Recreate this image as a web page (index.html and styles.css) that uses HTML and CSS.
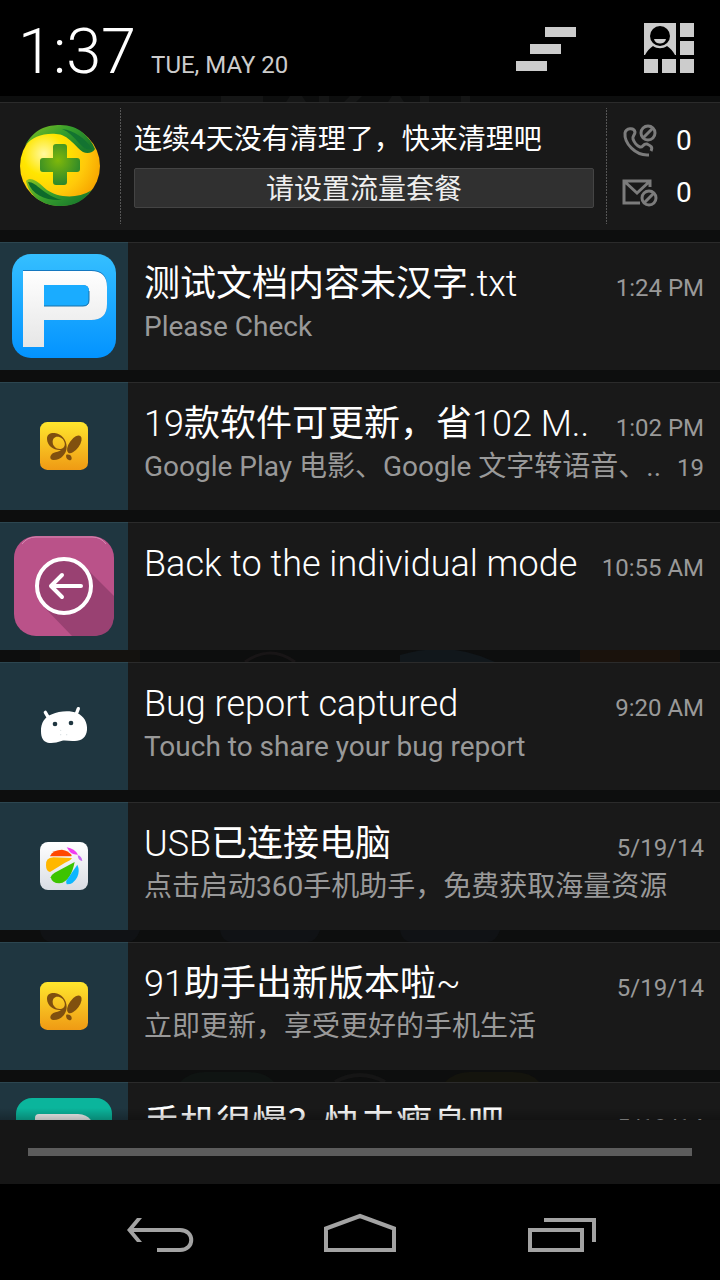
FILE: index.html
```html
<!DOCTYPE html>
<html lang="zh-CN">
<head>
<meta charset="utf-8">
<meta name="viewport" content="width=device-width, initial-scale=1">
<title>Notifications</title>
<link rel="stylesheet" href="styles.css">
</head>
<body>
<svg class="defs" width="0" height="0" aria-hidden="true">
  <defs>
    <linearGradient id="gold" x1="0" y1="0" x2="0" y2="1"><stop offset="0" stop-color="#ffe62d"/><stop offset="1" stop-color="#ef9a14"/></linearGradient>
    <symbol id="butterfly" viewBox="0 0 144 144">
      <rect width="144" height="144" rx="22" fill="url(#gold)"/>
      <g fill="#80500f">
        <path fill-rule="evenodd" d="M21 52C20 37 31 32 44 33C64 35 80 53 80 75C80 96 62 115 40 114C27 113 29 99 40 93C48 89 58 90 63 84C42 86 22 72 21 52ZM38 60C38 71 47 81 59 81C70 81 76 73 74 63C72 51 62 44 52 44C43 44 38 51 38 60Z"/>
        <ellipse cx="103" cy="67" rx="15" ry="31" transform="rotate(36 103 67)"/>
        <path d="M79 98C88 96 96 101 95 110C93 117 83 115 80 109C78 105 78 101 79 98Z"/>
      </g>
    </symbol>
  </defs>
</svg>

<header class="status">
  <time class="clock">1:37</time>
  <span class="date">TUE, MAY 20</span>
  <button class="tool" type="button" aria-label="Clear all notifications">
    <svg width="60" height="52" viewBox="516 22 60 52" fill="#ccc"><path d="M545 27h31v10h-31zM530 44h31v10h-31zM516 61h31v10h-31z"/></svg>
  </button>
  <button class="tool quick" type="button" aria-label="Quick settings">
    <svg width="52" height="52" viewBox="643 22 52 52" fill="#ccc">
      <path d="M644 23h32v32h-32zM680 23h14v14h-14zM680 41h14v14h-14zM680 59h14v14h-14zM662 59h14v14h-14zM644 59h14v14h-14z"/>
      <circle cx="660" cy="36" r="10" fill="#000"/>
      <path d="M645 55C647 51 650 48 653 46C657 49 663 49 667 46C670 48 673 51 675 55Z" fill="#000"/>
      <path d="M654 39H666C665 45 655 45 654 39Z"/>
    </svg>
  </button>
</header>

<main class="shade">
  <svg class="backdrop" width="720" height="1024" viewBox="0 96 720 1024" aria-hidden="true">
    <rect x="0" y="96" width="720" height="1024" fill="#0d0e0e"/>
    <g fill="#151616">
      <path d="M221 96h42v6h-42zM290 96h12l4 6h-20zM319 96h10v6h-10zM350 96h12l-6 6h-12zM392 96h8l4 6h-16zM420 96h9v6h-9zM461 96h9v6h-9z"/>
      <path d="M400 655Q450 640 495 662H400Z" fill="#11171b"/>
      <path d="M580 650h100v12h-100z" fill="#1a120c"/>
      <path d="M40 650h100v12h-100z" fill="#14120f"/>
      <path d="M245 662Q270 644 295 662" fill="none" stroke="#181516" stroke-width="3"/>
      <path d="M40 930h100q-4 12-12 12H52q-10 0-12-12zM220 930h100q-4 12-12 12h-76q-10 0-12-12zM400 930h100q-4 12-12 12h-76q-10 0-12-12z" fill="#101215"/>
      <path d="M180 1082q10-10 24-10h44q18 0 26 10z" fill="#0f1412"/>
      <path d="M445 1082q10-10 24-10h44q18 0 26 10z" fill="#14140d"/>
      <path d="M335 1082q25-14 50 0" fill="none" stroke="#151515" stroke-width="4"/>
    </g>
  </svg>

  <section class="card cleaner">
    <div class="brand">
      <svg width="82" height="82" viewBox="19 125 82 82" role="img" aria-label="360">
        <defs>
          <radialGradient id="ball" cx=".3" cy=".35" r=".75"><stop offset="0" stop-color="#fff9a0"/><stop offset=".35" stop-color="#ffe600"/><stop offset=".7" stop-color="#ffc90a"/><stop offset="1" stop-color="#f7a500"/></radialGradient>
          <linearGradient id="leaf" x1="0" y1="0" x2="1" y2=".6"><stop offset="0" stop-color="#8cc220"/><stop offset=".5" stop-color="#38a02c"/><stop offset="1" stop-color="#1a7a2c"/></linearGradient>
          <radialGradient id="plus" cx=".45" cy=".4" r=".7"><stop offset="0" stop-color="#7fb80a"/><stop offset="1" stop-color="#1f8030"/></radialGradient>
        </defs>
        <circle cx="60" cy="166" r="40" fill="url(#ball)"/>
        <path d="M25 146C34 128 48 125 60 125C70 125 77 128 82 132C88 137 92 142 95 149C93 153 87 154 83 152C78 149 76 145 72 142C67 137 62 134 56 134C43 133 32 137 25 146Z" fill="url(#leaf)"/>
        <path d="M62 129C74 130 86 139 92 149C87 151 83 147 79 143C74 137 69 132 62 129Z" fill="#137331"/>
        <path d="M26 181C29 178 32 179 36 181C41 184 43 187 47 190C57 197 76 200 92 190C84 201 73 207 58 206C41 205 29 195 26 181Z" fill="url(#leaf)"/>
        <path d="M28 182C37 182 44 196 62 200C46 201 32 195 28 182Z" fill="#0d6a2a"/>
        <path d="M56 144h8q3 0 3 3v11h10q3 0 3 3v8q0 3-3 3H67v10q0 3-3 3h-8q-3 0-3-3V172H43q-3 0-3-3v-8q0-3 3-3h10v-11q0-3 3-3Z" fill="url(#plus)"/>
      </svg>
    </div>
    <div class="advice">
      <p class="advice-text">连续4天没有清理了，快来清理吧</p>
      <button class="plan" type="button">请设置流量套餐</button>
    </div>
    <div class="blocked">
      <div class="count">
        <svg width="36" height="36" viewBox="0 0 36 36" fill="none" stroke="#7c7c7c" stroke-width="3" role="img" aria-label="Blocked calls">
          <path d="M25 32C14 32 2 21 3 10C4 5 12 4 13 9C13 12 10 13 11 16C12 19 15 23 18 24C21 25 21 20 25 21C29 23 31 24 29 28M25 32L27 32"/>
          <circle cx="26" cy="10" r="7"/><path d="M21 15L31 5"/>
        </svg>
        <span>0</span>
      </div>
      <div class="count">
        <svg width="36" height="36" viewBox="0 0 36 36" fill="none" stroke="#7c7c7c" stroke-width="3" role="img" aria-label="Blocked messages">
          <path d="M18 28H2V6H28V12M2 6L15 18L28 6"/>
          <circle cx="27" cy="23" r="7"/><path d="M22 28L32 18"/>
        </svg>
        <span>0</span>
      </div>
    </div>
  </section>

  <article class="card">
    <div class="thumb">
      <svg width="104" height="104" viewBox="0 0 104 104" aria-hidden="true">
        <defs>
          <linearGradient id="blue" x1="0" y1="0" x2="0" y2="1"><stop offset="0" stop-color="#35bfff"/><stop offset="1" stop-color="#0393ff"/></linearGradient>
          <linearGradient id="paper" x1="0" y1="0" x2="0" y2="1"><stop offset="0" stop-color="#fff"/><stop offset="1" stop-color="#e6e6e6"/></linearGradient>
        </defs>
        <rect width="104" height="104" rx="19" fill="url(#blue)"/>
        <path d="M11 16H79Q95 16 95 32V50Q95 66 79 66H32V93H11Z" fill="#1578c0"/>
        <path fill-rule="evenodd" d="M11 17H79Q95 17 95 33V50Q95 66 79 66H32V93H11ZM32 31V52H71Q77 52 77 46V37Q77 31 71 31Z" fill="url(#paper)"/>
        <path d="M32 31H71Q77 31 77 37V46Q77 52 71 52H32Z" fill="#1aacff"/>
        <path d="M32 52H71Q77 52 77 46V37" fill="none" stroke="#1770a8" stroke-width="1"/>
      </svg>
    </div>
    <div class="body">
      <div class="line"><h2 class="title"><span class="han">测试文档内容未汉字</span>.txt</h2><time class="meta">1:24 PM</time></div>
      <div class="line"><p class="text">Please Check</p></div>
    </div>
  </article>

  <article class="card">
    <div class="thumb"><svg width="48" height="48" aria-hidden="true"><use href="#butterfly"/></svg></div>
    <div class="body">
      <div class="line"><h2 class="title">19<span class="han">款软件可更新，省</span>102 M..</h2><time class="meta">1:02 PM</time></div>
      <div class="line"><p class="text">Google Play 电影、Google 文字转语音、..</p><span class="meta">19</span></div>
    </div>
  </article>

  <article class="card">
    <div class="thumb">
      <svg width="100" height="100" viewBox="0 0 100 100" aria-hidden="true">
        <rect width="100" height="100" rx="22" fill="#ba5289"/>
        <path d="M70 30L100 60V78Q100 100 78 100H58L30 71Z" fill="#994172"/>
        <circle cx="50" cy="50" r="27" fill="#994172" stroke="#fff" stroke-width="4"/>
        <path d="M67 50H38M48 39L37 50L48 61" fill="none" stroke="#fff" stroke-width="4" stroke-linecap="round" stroke-linejoin="round"/>
        <path d="M8 8Q13 1 22 1H78Q87 1 92 8" fill="none" stroke="#d58bb3" stroke-width="1"/>
      </svg>
    </div>
    <div class="body">
      <div class="line"><h2 class="title">Back to the individual mode</h2><time class="meta">10:55 AM</time></div>
    </div>
  </article>

  <article class="card">
    <div class="thumb">
      <svg width="48" height="48" viewBox="0 0 144 144" aria-hidden="true">
        <path d="M16 31L27 50M115 20L108 38" stroke="#fff" stroke-width="10" stroke-linecap="round"/>
        <path d="M3 88C2 63 15 44 36 37C57 27 90 25 111 33C132 42 143 62 141 84C139 107 123 118 102 117C88 118 76 114 64 117C51 122 36 124 23 122C9 119 3 106 3 88Z" fill="#fff"/>
        <circle cx="45" cy="66" r="7" fill="#1f3640"/><circle cx="93" cy="63" r="7" fill="#1f3640"/>
        <circle cx="62" cy="85" r="2" fill="#d8e0e2"/><circle cx="62" cy="98" r="2" fill="#d8e0e2"/><circle cx="80" cy="98" r="2" fill="#d8e0e2"/>
      </svg>
    </div>
    <div class="body">
      <div class="line"><h2 class="title">Bug report captured</h2><time class="meta">9:20 AM</time></div>
      <div class="line"><p class="text">Touch to share your bug report</p></div>
    </div>
  </article>

  <article class="card">
    <div class="thumb">
      <svg width="48" height="48" viewBox="0 0 144 144" aria-hidden="true">
        <defs><linearGradient id="pearl" x1="0" y1="0" x2="0" y2="1"><stop offset="0" stop-color="#fff"/><stop offset="1" stop-color="#d9dde4"/></linearGradient></defs>
        <rect width="144" height="144" rx="24" fill="url(#pearl)"/>
        <path d="M30 42Q40 23 66 23Q85 26 95 39L94 43H30Z" fill="#ff4600"/>
        <path d="M18 70Q16 48 40 46L96 48Q92 56 75 62L30 90Q18 88 18 70Z" fill="#ffb700"/>
        <path d="M104 60C98 90 85 122 58 124Q36 124 32 106Q34 98 44 92Z" fill="#3dc400"/>
        <path d="M112 68Q120 85 112 105Q100 128 80 127Q76 122 80 115Z" fill="#0db7ff"/>
        <path d="M80 16Q104 20 114 38Q98 38 90 30Z" fill="#f03cf0"/>
        <path d="M113 40Q125 42 127 57Q115 57 113 40Z" fill="#c468f0"/>
      </svg>
    </div>
    <div class="body">
      <div class="line"><h2 class="title">USB<span class="han">已连接电脑</span></h2><time class="meta">5/19/14</time></div>
      <div class="line"><p class="text">点击启动360手机助手，免费获取海量资源</p></div>
    </div>
  </article>

  <article class="card">
    <div class="thumb"><svg width="48" height="48" aria-hidden="true"><use href="#butterfly"/></svg></div>
    <div class="body">
      <div class="line"><h2 class="title">91<span class="han">助手出新版本啦</span>~</h2><time class="meta">5/19/14</time></div>
      <div class="line"><p class="text">立即更新，享受更好的手机生活</p></div>
    </div>
  </article>

  <article class="card">
    <div class="thumb">
      <svg width="96" height="96" viewBox="0 0 96 96" aria-hidden="true">
        <rect width="96" height="96" rx="16" fill="#0bb59c"/>
        <path d="M19 20Q19 16 23 16H62Q78 17 78 34V80H19Z" fill="#f2f2f2"/>
      </svg>
    </div>
    <div class="body">
      <div class="line"><h2 class="title"><span class="han">手机很慢？快去瘦身吧</span></h2><time class="meta">5/19/14</time></div>
    </div>
  </article>
</main>

<div class="handle"><div class="grip"></div></div>

<nav class="nav" aria-label="System">
  <button class="key" type="button" aria-label="Back">
    <svg width="80" height="48" viewBox="0 0 80 48" fill="none" stroke="#a3a3a3" stroke-width="4"><path d="M9 22H60C75 22 75 42 60 42H37"/><path d="M17 10H22L12 22L22 34H17L7 22Z" fill="#a3a3a3" stroke="none"/></svg>
  </button>
  <button class="key" type="button" aria-label="Home">
    <svg width="80" height="48" viewBox="0 0 80 48" fill="none" stroke="#a3a3a3" stroke-width="4"><path d="M6 42V20.500L40 8L74 20.500V42Z"/></svg>
  </button>
  <button class="key" type="button" aria-label="Recent apps">
    <svg width="80" height="48" viewBox="0 0 80 48" fill="none" stroke="#a3a3a3" stroke-width="4"><path d="M10 22H62V42H10ZM24 12H74V34"/></svg>
  </button>
</nav>
</body>
</html>
```

FILE: styles.css
```css
* {
  box-sizing: border-box;
}

body {
  margin: 0;
  height: 100vh;
  display: flex;
  flex-direction: column;
  overflow: hidden;
  background: #000;
  color: #fff;
  font-family: Roboto, "Noto Sans CJK SC", sans-serif;
}

h2,
p {
  margin: 0;
}

button {
  border: 0;
  padding: 0;
  background: none;
  color: inherit;
  font: inherit;
}

svg {
  display: block;
  flex: none;
}

.defs {
  position: absolute;
}

.status {
  display: flex;
  align-items: baseline;
  padding: 14px 25px 0 18px;
  height: 96px;
  flex: none;
}

.clock {
  font-size: 63px;
  line-height: 76px;
  font-weight: 300;
}

.date {
  margin-left: 15px;
  margin-right: auto;
  font-size: 24px;
  color: #ccc;
}

.tool {
  align-self: flex-start;
  padding-top: 8px;
}

.quick {
  margin-left: 67px;
}

.shade {
  position: relative;
  flex: 1;
  min-height: 0;
  overflow: hidden;
  display: flex;
  flex-direction: column;
  gap: 12px;
  padding-top: 6px;
  background: #0d0e0e;
}

.shade::after {
  content: "";
  position: absolute;
  inset: auto 0 0;
  height: 12px;
  background: linear-gradient(rgba(0, 0, 0, 0), rgba(0, 0, 0, 0.25));
}

.backdrop {
  position: absolute;
  top: 0;
  left: 0;
}

.card {
  position: relative;
  display: flex;
  flex: none;
  min-height: 128px;
  background: #191919;
  box-shadow: inset 0 1px #2b2b2b;
}

.thumb {
  width: 128px;
  flex: none;
  display: grid;
  place-items: center;
  background: #1f3640;
  box-shadow: inset 0 1px #2c4650;
}

.body {
  flex: 1;
  min-width: 0;
  padding: 20px 16px 0;
}

.line {
  display: flex;
  align-items: baseline;
  justify-content: space-between;
  gap: 12px;
  white-space: nowrap;
}

.title {
  font-size: 36px;
  line-height: 44px;
  font-weight: 300;
}

.han {
  font-weight: 400;
}

.text {
  font-size: 28px;
  line-height: 42px;
  color: #999;
}

.meta {
  font-size: 24px;
  line-height: 36px;
  color: #999;
}

.brand {
  width: 120px;
  display: grid;
  place-items: center;
}

.advice {
  flex: 1;
  padding: 16px 12px 0 13px;
  border: 1px dashed #484848;
  border-width: 0 1px;
  border-image: repeating-linear-gradient(#555 0 2px, #191919 2px 3px) 1;
  margin: 6px 0;
}

.advice-text {
  font-size: 28px;
  line-height: 32px;
  white-space: nowrap;
}

.plan {
  display: block;
  width: 100%;
  height: 40px;
  margin-top: 12px;
  padding-top: 4px;
  border: 1px solid #444;
  border-radius: 2px;
  background: #303030;
  color: #eee;
  font-size: 28px;
  line-height: 34px;
}

.blocked {
  width: 113px;
  padding: 20px 0 0 15px;
}

.count {
  display: flex;
  align-items: center;
  gap: 18px;
  height: 52px;
  padding-bottom: 14px;
  font-size: 28px;
  line-height: 36px;
}

.handle {
  flex: none;
  padding: 28px;
  background: #161616;
}

.grip {
  height: 8px;
  background: #5c5c5c;
}

.nav {
  flex: none;
  display: flex;
  justify-content: center;
  height: 96px;
}

.key {
  width: 200px;
  display: grid;
  place-items: center;
}
```
